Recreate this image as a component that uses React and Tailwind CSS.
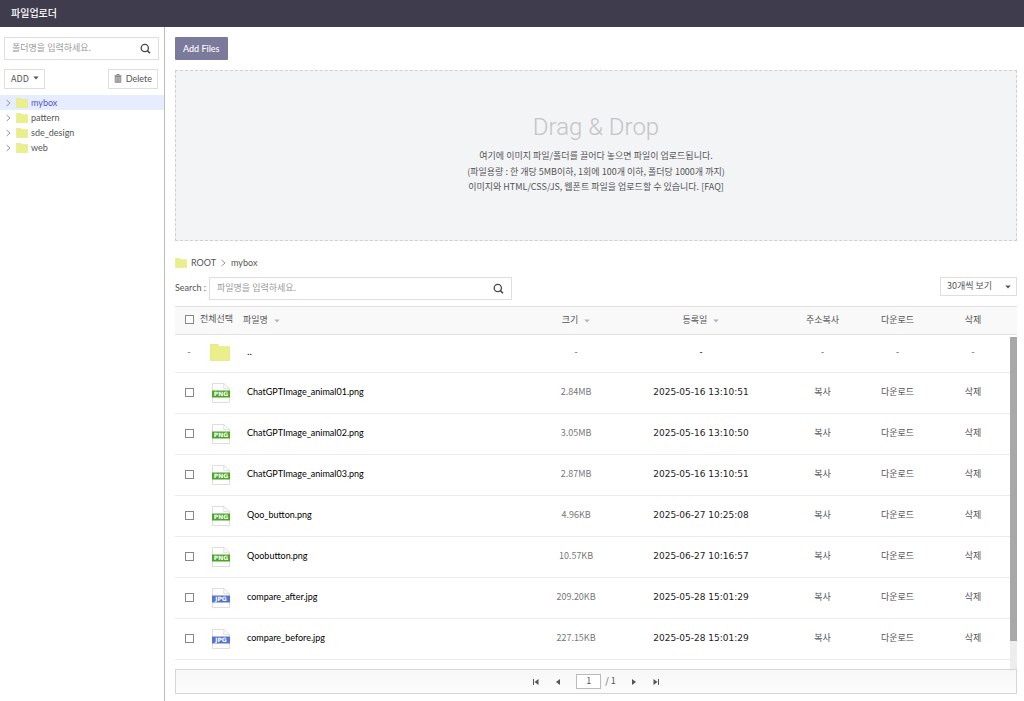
import React, { useState } from 'react';

const folders = ['mybox', 'pattern', 'sde_design', 'web'];

const files = [
  { name: 'ChatGPTImage_animal01.png', size: '2.84MB', date: '2025-05-16 13:10:51' },
  { name: 'ChatGPTImage_animal02.png', size: '3.05MB', date: '2025-05-16 13:10:50' },
  { name: 'ChatGPTImage_animal03.png', size: '2.87MB', date: '2025-05-16 13:10:51' },
  { name: 'Qoo_button.png', size: '4.96KB', date: '2025-06-27 10:25:08' },
  { name: 'Qoobutton.png', size: '10.57KB', date: '2025-06-27 10:16:57' },
  { name: 'compare_after.jpg', size: '209.20KB', date: '2025-05-28 15:01:29' },
  { name: 'compare_before.jpg', size: '227.15KB', date: '2025-05-28 15:01:29' },
];

const FolderIcon = ({ className }) => (
  <svg viewBox="0 0 20 17" className={className} aria-hidden="true">
    <path d="M0.5 0.5H8l1 2.2h10.5v13.8H0.5z" fill="#ebef8b" stroke="#e2e67e" strokeWidth="0.8" />
  </svg>
);

const SearchIcon = () => (
  <svg viewBox="0 0 12 12" className="size-3" fill="none" stroke="#4a4a4a" strokeWidth="1.3" aria-hidden="true">
    <circle cx="5.8" cy="5" r="3.6" />
    <path d="M8.4 7.6l2.6 2.6" strokeWidth="1.6" />
  </svg>
);

const ChevronIcon = () => (
  <svg viewBox="0 0 5 8" className="h-2 w-[5px] shrink-0" fill="none" stroke="#8a8a8a" strokeWidth="0.9" aria-hidden="true">
    <path d="M0.6 1L4 4 0.6 7" />
  </svg>
);

const CaretIcon = ({ className }) => (
  <svg viewBox="0 0 6 4" className={className} aria-hidden="true">
    <path d="M0.3 0.4h5.4L3 3.5z" fill="currentColor" />
  </svg>
);

const TrashIcon = () => (
  <svg viewBox="0 0 8 9" className="h-[9px] w-2 shrink-0" fill="none" stroke="#7a7a7a" aria-hidden="true">
    <path d="M0.4 1.8h7.2M2.8 1.3V0.5h2.4v0.8" strokeWidth="0.9" />
    <path d="M1.2 2.5h5.6v5.8H1.2z" fill="#c4c4c4" strokeWidth="0.8" />
    <path d="M3 3v5M4 3v5M5 3v5" strokeWidth="0.5" />
  </svg>
);

const FileIcon = ({ name }) => {
  const isPng = name.endsWith('.png');
  return (
    <svg viewBox="0 0 18 20" className="mx-auto h-5 w-[18px]" aria-hidden="true">
      <path d="M0.5 0.5h11.3l5.7 5.2v13.8H0.5z" fill="#fff" stroke="#d6d6d6" strokeWidth="0.8" />
      <path d="M11.8 0.5v5.2h5.7" fill="none" stroke="#d6d6d6" strokeWidth="0.8" />
      <rect x="0" y="7.5" width="18" height="7" fill={isPng ? '#4ba526' : '#5874cc'} />
      <text x="9" y="13.3" textAnchor="middle" fontSize="6" fill="#fff" className="font-['DejaVu_Sans',sans-serif] font-bold">
        {isPng ? 'PNG' : 'JPG'}
      </text>
    </svg>
  );
};

const PagerButton = ({ label, path }) => (
  <button type="button" aria-label={label} className="flex size-4 items-center justify-center text-[#555]">
    <svg viewBox="0 0 6 6" className="size-1.5" fill="currentColor" aria-hidden="true">
      <path d={path} />
    </svg>
  </button>
);

const Checkbox = ({ id, label, checked, onChange }) => (
  <input
    id={id}
    type="checkbox"
    aria-label={label}
    checked={checked}
    onChange={onChange}
    className="block size-[9px] shrink-0 appearance-none border border-[#888] bg-white checked:bg-[#7c7a9c]"
  />
);

const Sidebar = () => {
  const [active, setActive] = useState('mybox');

  return (
    <aside className="w-[165px] shrink-0 border-r border-[#bdbdbd] pt-[10px]">
      <div className="ml-1 mr-[5px] flex h-[23px] items-center border border-[#dedede] pr-[7px]">
        <input
          type="text"
          aria-label="폴더명 검색"
          placeholder="폴더명을 입력하세요."
          className="min-w-0 flex-1 px-[7px] pb-0.5 outline-none placeholder:text-[#999]"
        />
        <button type="button" aria-label="검색"><SearchIcon /></button>
      </div>
      <div className="ml-1 mr-1.5 mt-[9px] flex justify-between">
        <button type="button" className="flex h-5 items-center gap-1 border border-[#dedede] px-[5px] pb-0.5 pl-1.5">
          ADD <CaretIcon className="h-1 w-1.5" />
        </button>
        <button
          type="button"
          className="flex h-5 items-center gap-1 border border-[#dedede] px-[5px] pb-0.5 font-[Lato,sans-serif]"
        >
          <TrashIcon /> Delete
        </button>
      </div>
      <ul className="mt-1.5 font-[Lato,'Noto_Sans_CJK_KR',sans-serif]">
        {folders.map((folder) => (
          <li key={folder} className={active === folder ? 'bg-[#e6edff] text-[#5450dc]' : ''}>
            <button
              type="button"
              onClick={() => setActive(folder)}
              className="flex h-[15px] w-full items-center pl-1.5"
            >
              <ChevronIcon />
              <FolderIcon className="ml-[5px] mr-[3px] h-[10px] w-3" />
              {folder}
            </button>
          </li>
        ))}
      </ul>
    </aside>
  );
};

const FileTable = () => {
  const [selected, setSelected] = useState([]);
  const allSelected = selected.length === files.length;

  const toggle = (name) => {
    setSelected(selected.includes(name) ? selected.filter((n) => n !== name) : [...selected, name]);
  };

  return (
    <div className="relative mt-1.5 flex-1">
      <table className="w-full table-fixed border-collapse text-center">
        <colgroup>
          <col className="w-[28px]" />
          <col className="w-[34px]" />
          <col />
          <col className="w-[82px]" />
          <col className="w-[168px]" />
          <col className="w-[75px]" />
          <col className="w-[75px]" />
          <col className="w-[82px]" />
        </colgroup>
        <thead>
          <tr className="h-[28px] border-y border-[#e2e2e2] bg-[#f9f9f9] text-[#555]">
            <th colSpan="2" className="pb-0.5 font-normal">
              <div className="flex items-center gap-1.5 whitespace-nowrap pl-[10px]">
                <Checkbox
                  id="select-all"
                  checked={allSelected}
                  onChange={() => setSelected(allSelected ? [] : files.map((f) => f.name))}
                />
                <label htmlFor="select-all" className="pb-0.5">전체선택</label>
              </div>
            </th>
            <th className="pb-0.5 pl-1.5 text-left font-normal">
              파일명 <CaretIcon className="ml-1 inline h-1 w-1.5 text-[#b5b5b5]" />
            </th>
            <th className="pb-0.5 font-normal">
              크기 <CaretIcon className="ml-1 inline h-1 w-1.5 text-[#b5b5b5]" />
            </th>
            <th className="pb-0.5 font-normal">
              등록일 <CaretIcon className="ml-1 inline h-1 w-1.5 text-[#b5b5b5]" />
            </th>
            <th className="pb-0.5 font-normal">주소복사</th>
            <th className="pb-0.5 font-normal">다운로드</th>
            <th className="pb-0.5 pr-1.5 font-normal">삭제</th>
          </tr>
        </thead>
        <tbody>
          <tr className="h-[38px] border-b border-[#ececec]">
            <td className="pb-1">-</td>
            <td className="pb-0.5"><FolderIcon className="mx-auto h-[17px] w-5" /></td>
            <td className="pb-1 pl-[10px] text-left text-black">..</td>
            <td className="pb-1">-</td>
            <td className="pb-1 text-black">-</td>
            <td className="pb-1">-</td>
            <td className="pb-1">-</td>
            <td className="pb-1 pr-1.5">-</td>
          </tr>
          {files.map((file) => (
            <tr key={file.name} className="h-[41px] border-b border-[#ececec]">
              <td className="pb-0.5 pl-[10px]">
                <Checkbox
                  label={file.name}
                  checked={selected.includes(file.name)}
                  onChange={() => toggle(file.name)}
                />
              </td>
              <td className="pl-0.5"><FileIcon name={file.name} /></td>
              <td className="pb-1 pl-[10px] text-left font-[Lato,'Noto_Sans_CJK_KR',sans-serif] text-black">
                {file.name}
              </td>
              <td className="pb-1 text-[#777]">{file.size}</td>
              <td className="pb-0.5 font-['DejaVu_Sans',sans-serif] text-[#222]">{file.date}</td>
              <td className="pb-1"><button type="button">복사</button></td>
              <td className="pb-1"><button type="button">다운로드</button></td>
              <td className="pb-1 pr-1.5"><button type="button">삭제</button></td>
            </tr>
          ))}
        </tbody>
      </table>
      {/* scrollbar */}
      <div className="absolute bottom-0 right-0 top-[31px] w-[7px] bg-[#ededed]">
        <div className="h-11/12 bg-[#a8a8a8]" />
      </div>
    </div>
  );
};

const App = () => {
  return (
    <div className="flex min-h-screen flex-col bg-white font-['Noto_Sans_CJK_KR','Noto_Sans',sans-serif] text-[9px] leading-[15px] text-[#555]">
      <header className="flex h-[27px] items-center bg-[#3f3c4d] px-[11px] pb-0.5">
        <h1 className="text-[10px] font-medium text-white">파일업로더</h1>
      </header>
      <div className="flex flex-1">
        <Sidebar />
        <main className="flex min-w-0 flex-1 flex-col pb-[7px] pl-[10px] pr-[7px] pt-[10px]">
          <button
            type="button"
            className="h-[23px] self-start rounded-[1px] bg-[#7c7a9c] px-2 font-[Lato,sans-serif] font-medium text-white"
          >
            Add Files
          </button>
          <section className="mt-[10px] flex h-[171px] flex-col items-center border border-dashed border-[#cfcfcf] bg-[#f3f4f6] pt-[41px] text-center">
            <h2 className="mb-1.5 font-[Roboto,sans-serif] text-[24px] font-light leading-[30px] text-[#c4c4c6]">
              Drag &amp; Drop
            </h2>
            <p>여기에 이미지 파일/폴더를 끌어다 놓으면 파일이 업로드됩니다.</p>
            <p className="mt-px">(파일용량 : 한 개당 5MB이하, 1회에 100개 이하, 폴더당 1000개 까지)</p>
            <p>
              이미지와 HTML/CSS/JS, 웹폰트 파일을 업로드할 수 있습니다. <a href="#faq">[FAQ]</a>
            </p>
          </section>
          <nav className="mt-[14px] flex items-center font-[Lato,sans-serif]">
            <FolderIcon className="mr-1 h-[10px] w-3" />
            <a href="#root">ROOT</a>
            <span className="mx-[5px]"><ChevronIcon /></span>
            <a href="#mybox">mybox</a>
          </nav>
          <div className="mt-[7px] flex items-start justify-between">
            <div className="flex items-center">
              <label htmlFor="file-search" className="w-[34px] pb-0.5 font-[Lato,sans-serif]">Search :</label>
              <div className="flex h-[23px] w-[303px] items-center border border-[#dedede] pr-[7px]">
                <input
                  id="file-search"
                  type="text"
                  placeholder="파일명을 입력하세요."
                  className="min-w-0 flex-1 px-[7px] pb-0.5 outline-none placeholder:text-[#999]"
                />
                <button type="button" aria-label="검색"><SearchIcon /></button>
              </div>
            </div>
            <div className="relative">
              <select
                aria-label="페이지당 개수"
                className="block h-[19px] w-[77px] appearance-none border border-[#dedede] bg-white pb-0.5 pl-1.5"
              >
                <option>30개씩 보기</option>
                <option>50개씩 보기</option>
              </select>
              <CaretIcon className="pointer-events-none absolute right-1.5 top-2 h-1 w-1.5" />
            </div>
          </div>
          <FileTable />
          <div className="flex h-[25px] items-center justify-center gap-1.5 border border-[#d5d5d5] bg-linear-to-b from-[#f7f7f7] to-[#fcfcfc]">
            <PagerButton label="처음" path="M0 0h1v6H0zM5.5 0v6L1.5 3z" />
            <PagerButton label="이전" path="M5 0v6L1 3z" />
            <div className="mx-1 flex items-center gap-1">
              <input
                type="text"
                aria-label="페이지"
                defaultValue="1"
                className="h-[15px] w-[25px] border border-[#bbb] bg-white pb-0.5 text-center"
              />
              <span className="pb-0.5">/ 1</span>
            </div>
            <PagerButton label="다음" path="M1 0v6l4-3z" />
            <PagerButton label="마지막" path="M5 0h1v6H5zM0.5 0v6l4-3z" />
          </div>
        </main>
      </div>
    </div>
  );
};

export default App;
